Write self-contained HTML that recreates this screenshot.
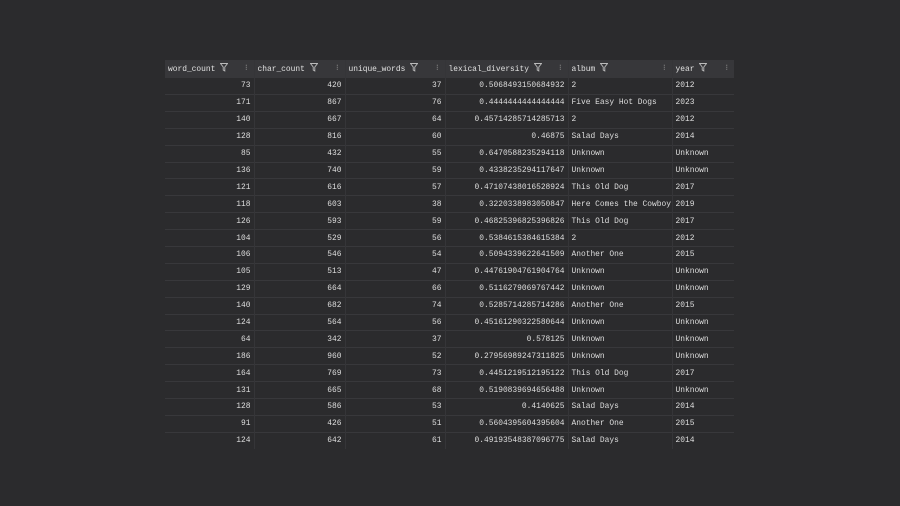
<!DOCTYPE html>
<html><head><style>
body{margin:0;width:900px;height:506px;background:#2b2b2d;overflow:hidden;font-family:"Liberation Mono",monospace;font-size:7.9px;color:#dedede}
table{position:absolute;left:165px;top:60px;border-collapse:collapse;table-layout:fixed;width:569px}
td,th{height:16.9px;padding:0 3px;white-space:nowrap;overflow:hidden;box-sizing:border-box;border-left:1px solid #353538}
td:first-child,th:first-child{border-left:none}
th{background:#37373a;font-weight:normal;text-align:left;height:17.6px;position:relative;color:#e0e0e0}
tr.r td{border-top:1px solid #38383b}
td.n{text-align:right}
.f{display:inline-block;margin-left:5px;vertical-align:-1px}
.s{position:absolute;right:6px;top:3px;color:#9a9a9a;font-size:8px}
</style></head><body>
<table>
<colgroup><col style="width:89px"><col style="width:91px"><col style="width:100px"><col style="width:123px"><col style="width:104px"><col style="width:62px"></colgroup>
<tr>
<th>word_count<svg class="f" width="8" height="9" viewBox="0 0 8 9"><path d="M0.5 0.5H7.5L4.8 4V8L3.2 7V4Z" fill="none" stroke="#bbb" stroke-width="0.9"/></svg><span class="s">⁝</span></th>
<th>char_count<svg class="f" width="8" height="9" viewBox="0 0 8 9"><path d="M0.5 0.5H7.5L4.8 4V8L3.2 7V4Z" fill="none" stroke="#bbb" stroke-width="0.9"/></svg><span class="s">⁝</span></th>
<th>unique_words<svg class="f" width="8" height="9" viewBox="0 0 8 9"><path d="M0.5 0.5H7.5L4.8 4V8L3.2 7V4Z" fill="none" stroke="#bbb" stroke-width="0.9"/></svg><span class="s">⁝</span></th>
<th>lexical_diversity<svg class="f" width="8" height="9" viewBox="0 0 8 9"><path d="M0.5 0.5H7.5L4.8 4V8L3.2 7V4Z" fill="none" stroke="#bbb" stroke-width="0.9"/></svg><span class="s">⁝</span></th>
<th>album<svg class="f" width="8" height="9" viewBox="0 0 8 9"><path d="M0.5 0.5H7.5L4.8 4V8L3.2 7V4Z" fill="none" stroke="#bbb" stroke-width="0.9"/></svg><span class="s">⁝</span></th>
<th>year<svg class="f" width="8" height="9" viewBox="0 0 8 9"><path d="M0.5 0.5H7.5L4.8 4V8L3.2 7V4Z" fill="none" stroke="#bbb" stroke-width="0.9"/></svg><span class="s">⁝</span></th>
</tr>
<tr><td class="n">73</td><td class="n">420</td><td class="n">37</td><td class="n">0.5068493150684932</td><td>2</td><td>2012</td></tr>
<tr class="r"><td class="n">171</td><td class="n">867</td><td class="n">76</td><td class="n">0.4444444444444444</td><td>Five Easy Hot Dogs</td><td>2023</td></tr>
<tr class="r"><td class="n">140</td><td class="n">667</td><td class="n">64</td><td class="n">0.45714285714285713</td><td>2</td><td>2012</td></tr>
<tr class="r"><td class="n">128</td><td class="n">816</td><td class="n">60</td><td class="n">0.46875</td><td>Salad Days</td><td>2014</td></tr>
<tr class="r"><td class="n">85</td><td class="n">432</td><td class="n">55</td><td class="n">0.6470588235294118</td><td>Unknown</td><td>Unknown</td></tr>
<tr class="r"><td class="n">136</td><td class="n">740</td><td class="n">59</td><td class="n">0.4338235294117647</td><td>Unknown</td><td>Unknown</td></tr>
<tr class="r"><td class="n">121</td><td class="n">616</td><td class="n">57</td><td class="n">0.47107438016528924</td><td>This Old Dog</td><td>2017</td></tr>
<tr class="r"><td class="n">118</td><td class="n">603</td><td class="n">38</td><td class="n">0.3220338983050847</td><td>Here Comes the Cowboy</td><td>2019</td></tr>
<tr class="r"><td class="n">126</td><td class="n">593</td><td class="n">59</td><td class="n">0.46825396825396826</td><td>This Old Dog</td><td>2017</td></tr>
<tr class="r"><td class="n">104</td><td class="n">529</td><td class="n">56</td><td class="n">0.5384615384615384</td><td>2</td><td>2012</td></tr>
<tr class="r"><td class="n">106</td><td class="n">546</td><td class="n">54</td><td class="n">0.5094339622641509</td><td>Another One</td><td>2015</td></tr>
<tr class="r"><td class="n">105</td><td class="n">513</td><td class="n">47</td><td class="n">0.44761904761904764</td><td>Unknown</td><td>Unknown</td></tr>
<tr class="r"><td class="n">129</td><td class="n">664</td><td class="n">66</td><td class="n">0.5116279069767442</td><td>Unknown</td><td>Unknown</td></tr>
<tr class="r"><td class="n">140</td><td class="n">682</td><td class="n">74</td><td class="n">0.5285714285714286</td><td>Another One</td><td>2015</td></tr>
<tr class="r"><td class="n">124</td><td class="n">564</td><td class="n">56</td><td class="n">0.45161290322580644</td><td>Unknown</td><td>Unknown</td></tr>
<tr class="r"><td class="n">64</td><td class="n">342</td><td class="n">37</td><td class="n">0.578125</td><td>Unknown</td><td>Unknown</td></tr>
<tr class="r"><td class="n">186</td><td class="n">960</td><td class="n">52</td><td class="n">0.27956989247311825</td><td>Unknown</td><td>Unknown</td></tr>
<tr class="r"><td class="n">164</td><td class="n">769</td><td class="n">73</td><td class="n">0.4451219512195122</td><td>This Old Dog</td><td>2017</td></tr>
<tr class="r"><td class="n">131</td><td class="n">665</td><td class="n">68</td><td class="n">0.5190839694656488</td><td>Unknown</td><td>Unknown</td></tr>
<tr class="r"><td class="n">128</td><td class="n">586</td><td class="n">53</td><td class="n">0.4140625</td><td>Salad Days</td><td>2014</td></tr>
<tr class="r"><td class="n">91</td><td class="n">426</td><td class="n">51</td><td class="n">0.5604395604395604</td><td>Another One</td><td>2015</td></tr>
<tr class="r"><td class="n">124</td><td class="n">642</td><td class="n">61</td><td class="n">0.49193548387096775</td><td>Salad Days</td><td>2014</td></tr>
</table>
</body></html>
